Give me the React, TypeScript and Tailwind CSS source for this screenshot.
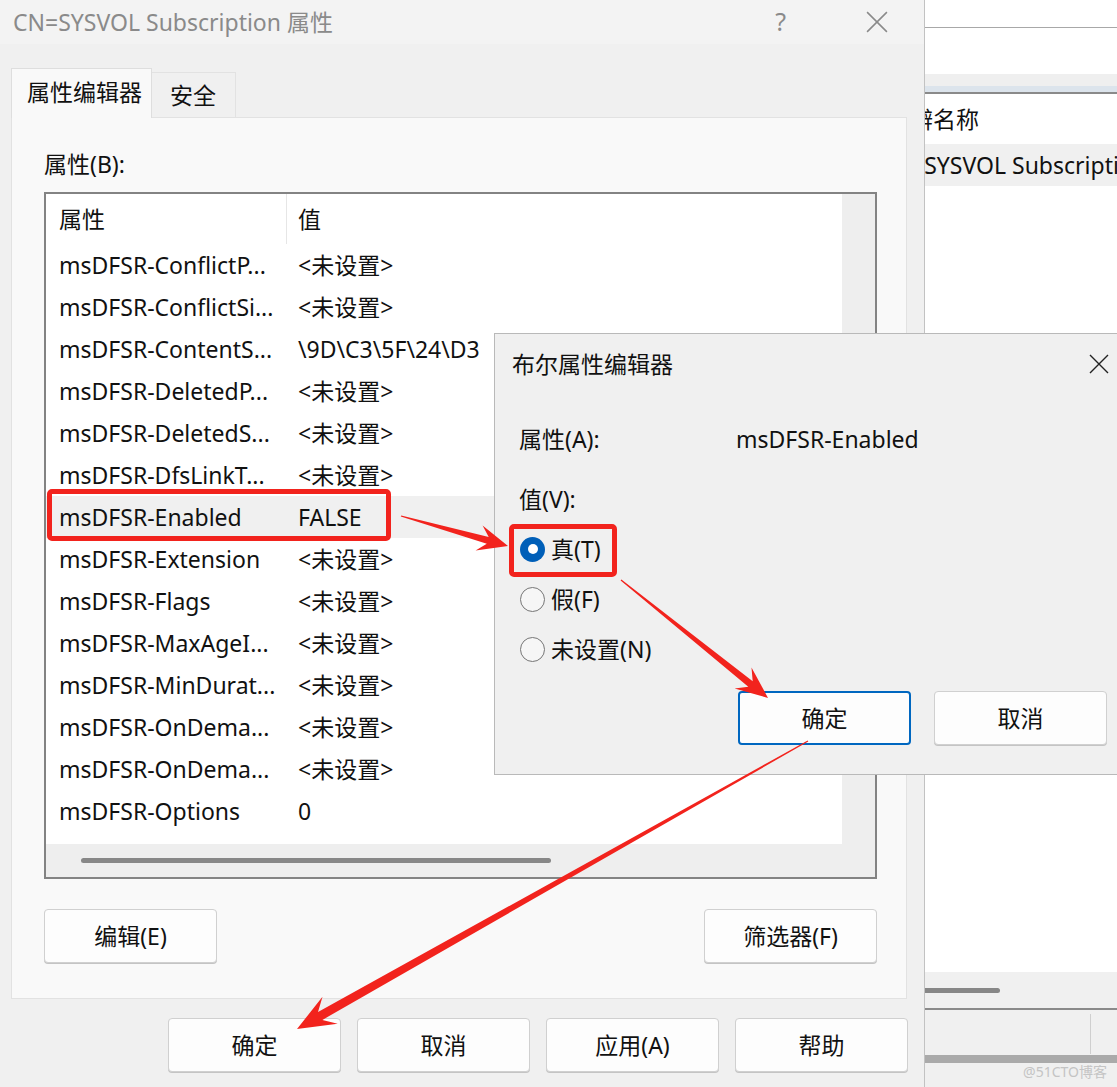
import React from 'react';

const FONT = "font-['Noto_Sans','Noto_Sans_CJK_SC',sans-serif]";

type Row = { name: string; value: string; selected?: boolean };

const rows: Row[] = [
  { name: 'msDFSR-ConflictP...', value: '<未设置>' },
  { name: 'msDFSR-ConflictSi...', value: '<未设置>' },
  { name: 'msDFSR-ContentS...', value: '\\9D\\C3\\5F\\24\\D3' },
  { name: 'msDFSR-DeletedP...', value: '<未设置>' },
  { name: 'msDFSR-DeletedS...', value: '<未设置>' },
  { name: 'msDFSR-DfsLinkT...', value: '<未设置>' },
  { name: 'msDFSR-Enabled', value: 'FALSE', selected: true },
  { name: 'msDFSR-Extension', value: '<未设置>' },
  { name: 'msDFSR-Flags', value: '<未设置>' },
  { name: 'msDFSR-MaxAgeI...', value: '<未设置>' },
  { name: 'msDFSR-MinDurat...', value: '<未设置>' },
  { name: 'msDFSR-OnDema...', value: '<未设置>' },
  { name: 'msDFSR-OnDema...', value: '<未设置>' },
  { name: 'msDFSR-Options', value: '0' },
];

// tapered annotation arrow, tail is thin and the head is a filled triangle
function arrowPoints(x1: number, y1: number, x2: number, y2: number, shaft: number, headLen: number, headW: number) {
  const dx = x2 - x1;
  const dy = y2 - y1;
  const len = Math.hypot(dx, dy);
  const ux = dx / len;
  const uy = dy / len;
  const px = -uy;
  const py = ux;
  const bx = x2 - ux * headLen;
  const by = y2 - uy * headLen;
  const jx = bx + ux * headLen * 0.3;
  const jy = by + uy * headLen * 0.3;
  const pts = [
    [x1 + px * 0.6, y1 + py * 0.6],
    [jx + (px * shaft) / 2, jy + (py * shaft) / 2],
    [bx + (px * headW) / 2, by + (py * headW) / 2],
    [x2, y2],
    [bx - (px * headW) / 2, by - (py * headW) / 2],
    [jx - (px * shaft) / 2, jy - (py * shaft) / 2],
    [x1 - px * 0.6, y1 - py * 0.6],
  ];
  return pts.map(p => `${p[0].toFixed(1)},${p[1].toFixed(1)}`).join(' ');
}

function WinButton({ label, primary }: { label: string; primary?: boolean }) {
  return (
    <div
      className={
        'w-[173px] h-[54px] flex items-center justify-center rounded-[4px] bg-[#fdfdfd] text-[23px] text-[#111] ' +
        (primary ? 'border-2 border-[#0067c0]' : 'border border-[#d0d0d0] shadow-[0_1px_0_#c4c4c4]')
      }
    >
      {label}
    </div>
  );
}

function CloseX({ size, color }: { size: number; color: string }) {
  return (
    <svg width={size} height={size} viewBox="0 0 20 20">
      <path d="M1 1 L19 19 M19 1 L1 19" stroke={color} strokeWidth="1.4" fill="none" />
    </svg>
  );
}

function Radio({ checked, label }: { checked?: boolean; label: string }) {
  return (
    <div className="h-[50px] flex items-center pl-[25px]">
      {checked ? (
        <div className="w-[25px] h-[25px] rounded-full bg-[#005fb8] flex items-center justify-center">
          <div className="w-[10px] h-[10px] rounded-full bg-white" />
        </div>
      ) : (
        <div className="w-[25px] h-[25px] rounded-full border-[1.5px] border-[#767676] bg-[#f6f6f6]" />
      )}
      <span className="ml-[6px] text-[23px] text-[#111]">{label}</span>
    </div>
  );
}

export default function App() {
  return (
    <div className={`relative w-[1117px] h-[1087px] overflow-hidden bg-[#f0f0f0] flex ${FONT}`}>
      {/* main properties window */}
      <div className="w-[924px] shrink-0 flex flex-col">
        <div className="h-[44px] flex items-center pl-[13px] bg-[#f3f3f3]">
          <span className="text-[23px] text-[#8a8a8a]">CN=SYSVOL Subscription 属性</span>
          <span className="ml-auto text-[25px] text-[#8a8a8a] mr-[80px]">?</span>
          <div className="mr-[36px]">
            <CloseX size={22} color="#8a8a8a" />
          </div>
        </div>

        <div className="mt-[24px] pl-[11px] flex items-end">
          <div className="relative z-10 -mb-px h-[50px] w-[141px] bg-[#f9f9f9] border border-b-0 border-[#dedede] flex items-center pl-[15px] pb-[3px] text-[23px] text-[#111]">
            属性编辑器
          </div>
          <div className="h-[45px] w-[84px] bg-[#f0f0f0] border border-l-0 border-b-0 border-[#e2e2e2] flex items-center pl-[18px] text-[23px] text-[#111]">
            安全
          </div>
        </div>

        <div className="ml-[11px] w-[896px] h-[882px] bg-[#f9f9f9] border border-[#e2e2e2] pl-[32px] pt-[31px] flex flex-col">
          <div className="h-[30px] flex items-center text-[23px] text-[#111]">属性(B):</div>
          <div className="mt-[13px] w-[833px] h-[687px] border-2 border-[#838383] bg-white flex flex-col">
            <div className="flex-1 flex overflow-hidden">
              <div className="flex-1 flex flex-col overflow-hidden">
                <div className="h-[50px] shrink-0 flex items-center text-[23px] text-[#111]">
                  <div className="w-[241px] h-full pl-[13px] flex items-center border-r border-[#e6e6e6]">属性</div>
                  <div className="pl-[11px]">值</div>
                </div>
                {rows.map((r, i) => (
                  <div
                    key={i}
                    className={'h-[42px] shrink-0 flex items-center text-[23px] text-[#111] whitespace-nowrap ' + (r.selected ? 'bg-[#f0f0f0]' : '')}
                  >
                    <div className="w-[241px] pl-[13px]">{r.name}</div>
                    <div className="pl-[11px]">{r.value}</div>
                  </div>
                ))}
              </div>
              <div className="w-[33px] bg-[#eeeeee]" />
            </div>
            <div className="h-[33px] shrink-0 bg-[#eeeeee] flex items-center">
              <div className="ml-[35px] w-[470px] h-[5px] rounded-full bg-[#878787]" />
            </div>
          </div>
          <div className="mt-[30px] w-[833px] flex justify-between">
            <WinButton label="编辑(E)" />
            <WinButton label="筛选器(F)" />
          </div>
        </div>

        <div className="mt-[19px] ml-[168px] flex gap-[16px]">
          <WinButton label="确定" />
          <WinButton label="取消" />
          <WinButton label="应用(A)" />
          <WinButton label="帮助" />
        </div>
      </div>

      {/* window behind, on the right */}
      <div className="flex-1 flex flex-col border-l border-[#c2c2c2] bg-white overflow-hidden">
        <div className="h-[28px] border-b border-[#a8a8a8]" />
        <div className="h-[46px]" />
        <div className="h-[12px] bg-[#efefef]" />
        <div className="h-[8px] bg-[#dce4ec] border-b-2 border-[#8a8a8a]" />
        <div className="h-[50px] flex items-center whitespace-nowrap text-[23px] text-[#111]">
          <span className="-ml-[15px]">辨名称</span>
        </div>
        <div className="h-[42px] flex items-center whitespace-nowrap bg-[#f0f0f0] text-[23px] text-[#111]">
          <span className="-ml-[46px]">CN=SYSVOL Subscription</span>
        </div>
        <div className="flex-1" />
        <div className="h-[36px] bg-[#f0f0f0] flex items-center">
          <div className="w-[75px] h-[5px] rounded-r-full bg-[#878787]" />
        </div>
        <div className="h-[2px] bg-[#8a8a8a]" />
        <div className="h-[45px] bg-[#f0f0f0] flex">
          <div className="ml-[165px] w-px h-[40px] mt-[4px] bg-[#cfcfcf]" />
        </div>
        <div className="h-[8px] bg-[#aaaaaa]" />
        <div className="h-[24px] bg-[#f0f0f0] flex items-start justify-end pr-[10px]">
          <span className="text-[14px] leading-[18px] text-[#c4c4c4]">@51CTO博客</span>
        </div>
      </div>

      {/* boolean attribute editor dialog */}
      <div className="absolute left-[494px] top-[333px] w-[640px] h-[442px] bg-[#f0f0f0] border border-[#b9b9b9] flex flex-col">
        <div className="h-[60px] flex items-center justify-between pl-[17px] pr-[24px]">
          <span className="text-[23px] text-[#111]">布尔属性编辑器</span>
          <CloseX size={20} color="#222" />
        </div>
        <div className="mt-[30px] h-[30px] flex items-center pl-[24px] text-[23px] text-[#111]">
          <span className="w-[217px]">属性(A):</span>
          <span>msDFSR-Enabled</span>
        </div>
        <div className="mt-[30px] h-[30px] flex items-center pl-[24px] text-[23px] text-[#111]">值(V):</div>
        <div className="mt-[10px] flex flex-col">
          <Radio checked label="真(T)" />
          <Radio label="假(F)" />
          <Radio label="未设置(N)" />
        </div>
        <div className="mt-[17px] ml-[243px] flex gap-[23px]">
          <WinButton label="确定" primary />
          <WinButton label="取消" />
        </div>
      </div>

      {/* red annotation boxes */}
      <div className="absolute left-[47px] top-[489px] w-[344px] h-[52px] border-[5px] border-[#f2231d] rounded-[5px]" />
      <div className="absolute left-[509px] top-[524px] w-[108px] h-[53px] border-[5px] border-[#f2231d] rounded-[5px]" />

      {/* red annotation arrows */}
      <svg className="absolute inset-0 pointer-events-none" width="1117" height="1087" viewBox="0 0 1117 1087">
        <polygon points={arrowPoints(401, 516, 508, 546, 7, 30, 26)} fill="#f2231d" />
        <polygon points={arrowPoints(621, 580, 768, 698, 7, 32, 27)} fill="#f2231d" />
        <polygon points={arrowPoints(808, 741, 297, 1029, 9, 38, 31)} fill="#f2231d" />
      </svg>
    </div>
  );
}
